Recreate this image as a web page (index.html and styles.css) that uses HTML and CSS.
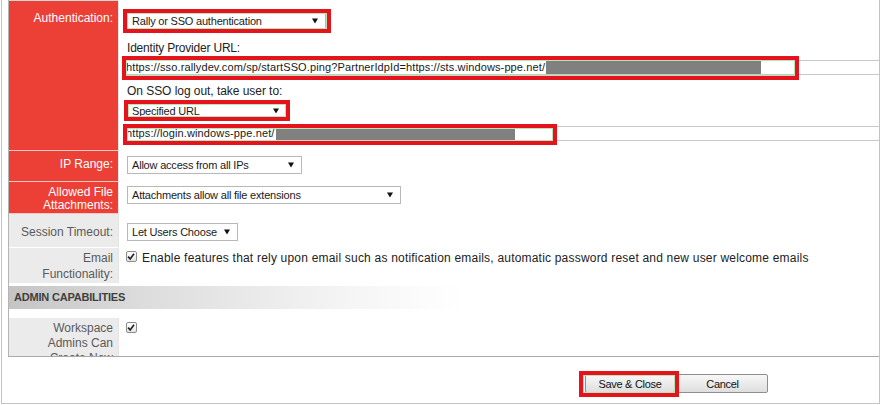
FILE: index.html
```html
<!DOCTYPE html>
<html>
<head>
<meta charset="utf-8">
<link rel="stylesheet" href="styles.css">
</head>
<body>
<div class="frame">
  <div class="panel">
    <div class="row r-auth">
      <div class="label red">Authentication:</div>
      <div class="cell">
        <div class="anchor">
          <div class="select w-auth"><span>Rally or SSO authentication</span><svg class="arr" viewBox="0 0 6 6" width="6" height="6"><path d="M0 0.5h6L3 5.5z"/></svg></div>
          <span class="annot a-auth"></span>
        </div>
        <div class="caption c1">Identity Provider URL:</div>
        <div class="anchor url u1"><span>https://sso.rallydev.com/sp/startSSO.ping?PartnerIdpId=https://sts.windows-ppe.net/</span><span class="redact rd1"></span><span class="annot a-idp"></span></div>
        <div class="caption c2">On SSO log out, take user to:</div>
        <div class="anchor s2">
          <div class="select w-spec"><span>Specified URL</span><svg class="arr" viewBox="0 0 6 6" width="6" height="6"><path d="M0 0.5h6L3 5.5z"/></svg></div>
          <span class="annot a-spec"></span>
        </div>
        <div class="anchor url u2"><span>https://login.windows-ppe.net/</span><span class="redact rd2"></span><span class="annot a-out"></span></div>
      </div>
    </div>
    <div class="row r-ip">
      <div class="label red">IP Range:</div>
      <div class="cell">
        <div class="select w-ip"><span>Allow access from all IPs</span><svg class="arr" viewBox="0 0 6 6" width="6" height="6"><path d="M0 0.5h6L3 5.5z"/></svg></div>
      </div>
    </div>
    <div class="row r-att">
      <div class="label red">Allowed File Attachments:</div>
      <div class="cell">
        <div class="select w-att"><span>Attachments allow all file extensions</span><svg class="arr" viewBox="0 0 6 6" width="6" height="6"><path d="M0 0.5h6L3 5.5z"/></svg></div>
      </div>
    </div>
    <div class="row r-ses">
      <div class="label grey">Session Timeout:</div>
      <div class="cell">
        <div class="select w-ses"><span>Let Users Choose</span><svg class="arr" viewBox="0 0 6 6" width="6" height="6"><path d="M0 0.5h6L3 5.5z"/></svg></div>
      </div>
    </div>
    <div class="row r-email">
      <div class="label grey">Email Functionality:</div>
      <div class="cell check-line">
        <span class="checkbox"><svg viewBox="0 0 11 11" width="11" height="11"><path d="M2.3 5.6L4.6 8.2L8.8 2.4" fill="none" stroke="#222" stroke-width="1.8"/></svg></span>
        <span class="check-text">Enable features that rely upon email such as notification emails, automatic password reset and new user welcome emails</span>
      </div>
    </div>
    <div class="section-head">ADMIN CAPABILITIES</div>
    <div class="row r-ws">
      <div class="label grey">Workspace Admins Can Create New Projects:</div>
      <div class="cell check-line">
        <span class="checkbox"><svg viewBox="0 0 11 11" width="11" height="11"><path d="M2.3 5.6L4.6 8.2L8.8 2.4" fill="none" stroke="#222" stroke-width="1.8"/></svg></span>
      </div>
    </div>
  </div>
  <div class="footer">
    <div class="anchor">
      <button class="btn b-save">Save &amp; Close</button>
      <span class="annot a-save"></span>
    </div>
    <button class="btn b-cancel">Cancel</button>
  </div>
</div>
</body>
</html>
```

FILE: styles.css
```css
html, body {
  margin: 0;
  padding: 0;
  background: #fff;
}
body {
  font-family: "Liberation Sans", Arial, sans-serif;
  color: #222;
}
.frame {
  box-sizing: border-box;
  width: 879px;
  height: 404px;
  margin-left: 1px;
  border: 1px solid #c4c4c4;
  border-top: 0;
  padding-left: 6px;
}
.panel {
  box-sizing: border-box;
  height: 357px;
  border-left: 1px solid #b4b4b4;
  border-bottom: 1px solid #a9a9a9;
  overflow: hidden;
}
.row {
  display: grid;
  grid-template-columns: 110px 1fr;
}
.label {
  box-sizing: border-box;
  border-right: 1px solid #e4e4e4;
  border-bottom: 1px solid #fff;
  text-align: right;
  padding: 0 5px;
  font-size: 12px;
  line-height: 14px;
}
.red {
  background: #ec4037;
  color: #fff;
  border-bottom-color: #f6c9c5;
}
.grey {
  background: #ebebeb;
  color: #5a5a5a;
}
.cell {
  padding-left: 8px;
}
.anchor {
  position: relative;
}
.annot {
  position: absolute;
  box-sizing: border-box;
  border: 4px solid #e5141c;
  box-shadow: inset 0 0 0 1px #b6e4b6;
  pointer-events: none;
}

/* selects */
.select {
  box-sizing: border-box;
  display: flex;
  align-items: center;
  justify-content: space-between;
  height: 18px;
  padding: 0 7px 0 4px;
  border: 1px solid #b8b8b8;
  background: #fff;
  font-size: 11px;
  letter-spacing: -0.2px;
  color: #1a1a1a;
  white-space: nowrap;
}
.arr {
  flex: none;
  fill: #111;
}
.w-auth { width: 199px; }
.w-spec { width: 160px; }
.w-ip { width: 175px; }
.w-att { width: 274px; }
.w-ses { width: 111px; }

/* authentication row */
.r-auth { height: 151px; }
.r-auth .label {
  padding-top: 11px;
  box-shadow: inset 0 1px 0 #d8d8d8;
}
.r-auth .cell { padding-top: 12px; }
.a-auth { left: -4px; top: -3px; width: 208px; height: 24px; }
.caption {
  font-size: 12px;
  line-height: 14px;
  color: #222;
  height: 14px;
}
.c1 { margin-top: 11px; letter-spacing: -0.2px; }
.c2 { margin-top: 9px; letter-spacing: -0.05px; }
.url {
  box-sizing: border-box;
  display: flex;
  align-items: center;
  height: 15px;
  margin-left: -3px;
  padding-left: 1px;
  border: 1px solid #c8c8c8;
  border-right: 0;
  font-size: 11px;
  letter-spacing: 0.12px;
  line-height: 13px;
  white-space: nowrap;
  color: #1a1a1a;
}
.u1 { margin-top: 5px; }
.s2 { margin-top: 4px; }
.u2 { margin-top: 6px; }
.redact {
  display: inline-block;
  flex: none;
  height: 13px;
  margin-left: 1px;
  background: #808080;
}
.rd1 { width: 215px; }
.rd2 { width: 239px; }
.a-idp { left: -3px; top: -5px; width: 677px; height: 24px; }
.a-spec { left: -3px; top: -2px; width: 166px; height: 21px; }
.a-out { left: -2px; top: -3px; width: 434px; height: 21px; }

/* other rows */
.r-ip { height: 31px; }
.r-ip .label { padding-top: 6px; }
.r-ip .cell { padding-top: 5px; }
.r-att { height: 32px; }
.r-att .label { padding-top: 4px; line-height: 13px; }
.r-att .cell { padding-top: 4px; }
.r-ses { height: 34px; }
.r-ses .label { padding-top: 11px; }
.r-ses .cell { padding-top: 9px; }
.r-email { height: 36px; }
.r-email .label { padding-top: 2px; line-height: 16px; }

.check-line {
  display: flex;
  align-items: flex-start;
  gap: 5px;
  padding-left: 7px;
}
.r-email .check-line { padding-top: 3px; }
.checkbox {
  box-sizing: border-box;
  flex: none;
  width: 11px;
  height: 11px;
  border: 1px solid #8c8c8c;
  border-radius: 2px;
  background: linear-gradient(#ffffff, #e4e4e4);
  display: flex;
}
.checkbox svg {
  margin: -1px 0 0 -1px;
}
.check-text {
  font-size: 12px;
  line-height: 14px;
  margin-top: 0;
  letter-spacing: 0.2px;
  color: #222;
  white-space: nowrap;
}

.section-head {
  margin-top: 2px;
  height: 23px;
  line-height: 23px;
  padding-left: 5px;
  background: linear-gradient(to right, #c4c4c4 0%, #dcdcdc 15%, #f4f4f4 38%, #ffffff 52%);
  font-size: 11px;
  font-weight: bold;
  letter-spacing: -0.2px;
  color: #3f3f3f;
}
.r-ws {
  margin-top: 9px;
  height: 60px;
}
.r-ws .label { padding-top: 3px; line-height: 15px; }
.r-ws .check-line { padding-top: 4px; }

/* footer buttons */
.footer {
  display: flex;
  gap: 2px;
  padding: 17px 0 0 577px;
}
.btn {
  box-sizing: border-box;
  display: flex;
  align-items: center;
  justify-content: center;
  height: 19px;
  margin: 0;
  padding: 0;
  border: 1px solid #8e8e8e;
  border-radius: 2px;
  background: linear-gradient(#f8f8f8, #dedede);
  font-family: "Liberation Sans", Arial, sans-serif;
  font-size: 11px;
  letter-spacing: -0.3px;
  color: #111;
}
.b-save { width: 90px; }
.b-cancel { width: 91px; }
.a-save { left: -6px; top: -3px; width: 100px; height: 26px; }
```
